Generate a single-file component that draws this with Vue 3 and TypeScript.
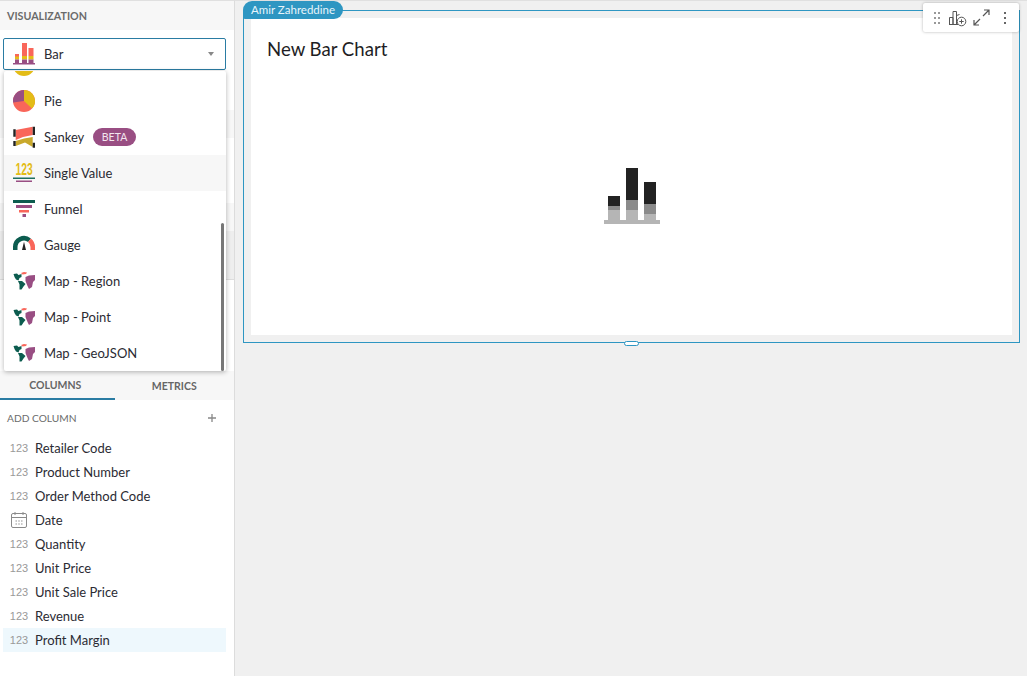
<script setup lang="ts">
const menu = [
  { label: 'Pie', icon: 'pie' },
  { label: 'Sankey', icon: 'sankey', beta: true },
  { label: 'Single Value', icon: 'single', hover: true },
  { label: 'Funnel', icon: 'funnel' },
  { label: 'Gauge', icon: 'gauge' },
  { label: 'Map - Region', icon: 'map' },
  { label: 'Map - Point', icon: 'map' },
  { label: 'Map - GeoJSON', icon: 'map' },
]
const columns = [
  { label: 'Retailer Code', type: 'num' },
  { label: 'Product Number', type: 'num' },
  { label: 'Order Method Code', type: 'num' },
  { label: 'Date', type: 'date' },
  { label: 'Quantity', type: 'num' },
  { label: 'Unit Price', type: 'num' },
  { label: 'Unit Sale Price', type: 'num' },
  { label: 'Revenue', type: 'num' },
  { label: 'Profit Margin', type: 'num', selected: true },
]
</script>

<template>
  <div class="page">
    <aside class="side">
      <div class="side-head">VISUALIZATION</div>
      <div class="picker-wrap">
        <div class="picker">
          <svg class="ico" width="24" height="24" viewBox="0 0 24 24">
            <path fill="#f9665a" d="M2 12h4v3H2zM9 1h5v13H9zM15.500 6h5v8h-5z" />
            <path fill="#e3bc17" d="M2 14.500h4v3H2zM9 14h5v3.500H9zM15.500 14h5v3.500h-5z" />
            <path fill="#994e83" d="M2 17.500h4V21H2zM9 17.500h5V21H9zM15.500 17.500h5V21h-5zM0 21h22v1.500H0z" />
          </svg>
          <span>Bar</span>
          <i class="caret"></i>
        </div>
      </div>
      <div class="under">
        <div class="under-a"></div>
        <div class="under-b"></div>
        <div class="under-c"></div>
      </div>
      <div class="tabs">
        <div class="tab active">COLUMNS</div>
        <div class="tab">METRICS</div>
      </div>
      <div class="add-row">
        <span>ADD COLUMN</span>
        <svg width="8" height="8" viewBox="0 0 8 8"><path d="M4 0v8M0 4h8" stroke="#888" stroke-width="1.300" /></svg>
      </div>
      <ul class="cols">
        <li v-for="c in columns" :key="c.label" class="col" :class="{ selected: c.selected }">
          <span class="type">
            <span v-if="c.type === 'num'" class="num">123</span>
            <svg v-else width="18" height="18" viewBox="0 0 18 18" fill="none" stroke="#8a8a8a">
              <rect x="1.500" y="2.500" width="15" height="14" rx="1.500" />
              <path d="M1.500 6.500h15M5 1v3M13 1v3" />
              <path stroke-dasharray="1.400 1.400" stroke-width="1.200" d="M5.500 10h7.500M5.500 13h7.500" />
            </svg>
          </span>
          <span>{{ c.label }}</span>
        </li>
      </ul>

      <div class="menu">
        <div class="menu-list">
          <div class="item">
            <svg class="ico" width="24" height="24" viewBox="0 0 24 24"><circle cx="11" cy="12" r="11" fill="#e3bc17" /><circle cx="11" cy="12" r="6" fill="#fff" /></svg>
          </div>
          <div v-for="m in menu" :key="m.label" class="item" :class="{ hover: m.hover }">
            <svg class="ico" width="24" height="24" viewBox="0 0 24 24">
              <template v-if="m.icon === 'pie'">
                <circle cx="11" cy="12" r="11" fill="#f9665a" />
                <path fill="#e3bc17" d="M11 1a11 11 0 0 1 8 18.500L11 12z" />
                <path fill="#994e83" d="M11 1v11L.1 13.500A11 11 0 0 1 11 1z" />
              </template>
              <template v-else-if="m.icon === 'sankey'">
                <path fill="#f9665a" d="M2.700 5 19.700 1.700V10L10 12 2.700 15z" />
                <path fill="#c9a92c" d="M2.700 16 11 13.500 19.700 12V22L12 17.500 2.700 21z" />
                <path fill="#222" d="M.3 4.300h2.400v7.400H.3zM.3 16h2.400v5H.3zM19.700 1.700H22V10h-2.300zM19.700 17.700H22v5h-2.300z" />
              </template>
              <template v-else-if="m.icon === 'single'">
                <text class="big-num" transform="translate(2.500 14) scale(.64 1)" font-size="16" font-weight="700" fill="#e3bc17">123</text>
                <rect x="0" y="16.500" width="22" height="1.500" fill="#1d6f60" />
                <rect x="3" y="19.500" width="16" height="1.500" fill="#994e83" />
              </template>
              <template v-else-if="m.icon === 'funnel'">
                <rect x="0" y="3" width="22" height="3" fill="#0c5c4f" />
                <rect x="3" y="8" width="16" height="3" fill="#994e83" />
                <rect x="6" y="13" width="10" height="2.500" fill="#f9665a" />
                <rect x="9.500" y="17" width="3.500" height="3" fill="#994e83" />
              </template>
              <template v-else-if="m.icon === 'gauge'">
                <path fill="none" stroke="#0c5c4f" stroke-width="4.500" d="M2.250 17v-3A8.750 8.750 0 0 1 16.500 7.200" />
                <path fill="none" stroke="#f9665a" stroke-width="4.500" d="M16.500 7.200A8.750 8.750 0 0 1 19.750 14v3" />
                <path fill="#222" d="M11 8.700l2 8.300H9z" />
              </template>
              <template v-else>
                <path fill="#0c5c4f" d="M.5 5 4 4.500 5.500 6 8.500 5 8.500 8 6.500 9 5.500 11.500 3 10.500 1.500 8zM5 12 9 12 12.500 15 10.500 17.500 8.500 20.500H6.500L6.500 15.500z" />
                <path fill="#f9665a" d="M8 4 11 3 14 3.500 13 5 9.500 5.500z" />
                <path fill="#994e83" d="M12.500 8 16 6.500 22 6 22 11 20 13 19 18 16 20 14.500 17 12.500 12z" />
              </template>
            </svg>
            <span>{{ m.label }}</span>
            <span v-if="m.beta" class="beta">BETA</span>
          </div>
        </div>
        <div class="scroll"></div>
      </div>
    </aside>

    <main class="canvas">
      <section class="frame">
        <div class="owner">Amir Zahreddine</div>
        <div class="tools">
          <svg width="8" height="14" viewBox="0 0 8 14" fill="#999"><path d="M1 1h2v2H1zM5 1h2v2H5zM1 6h2v2H1zM5 6h2v2H5zM1 11h2v2H1zM5 11h2v2H5z" /></svg>
          <svg width="18" height="18" viewBox="0 0 18 18" fill="none" stroke="#555" stroke-width="1"><path d="M.5 15.500v-7h3.500v7M4 15.500v-13h3.500v13M7.500 15.500v-9l3-1M0 15.500h9" /><circle cx="12.500" cy="12.500" r="4.300" fill="#fff" /><path d="M12.500 10.300v4.400M10.300 12.500h4.400" /></svg>
          <svg class="expand" width="17" height="17" viewBox="0 0 17 17" fill="none" stroke="#555" stroke-width="1.200"><path d="M10 7l6-6M11 1h5v5M7 10l-6 6M1 11v5h5" /></svg>
          <svg class="kebab" width="4" height="14" viewBox="0 0 4 14" fill="#666"><path d="M1 1h2v2H1zM1 6h2v2H1zM1 11h2v2H1z" /></svg>
        </div>
        <div class="card">
          <h2>New Bar Chart</h2>
          <div class="empty">
            <svg width="56" height="56" viewBox="0 0 56 56">
              <path fill="#222" d="M4 28h12v10H4zM22 0h12v32H22zM40 14h12v22H40z" />
              <path fill="#8a8a8a" d="M4 38h12v4H4zM22 32h12v10H22zM40 36h12v10H40z" />
              <path fill="#b5b5b5" d="M4 42h12v10H4zM22 42h12v10H22zM40 46h12v6H40zM0 52h56v4H0z" />
            </svg>
          </div>
        </div>
        <div class="handle"></div>
      </section>
    </main>
  </div>
</template>

<style>
html, body { margin: 0; background: #f0f0f0; }
</style>

<style scoped>
.page {
  display: flex;
  width: 1027px;
  height: 676px;
  overflow: hidden;
  font-family: Lato, "Noto Sans", sans-serif;
  font-size: 13px;
  color: #2b2b33;
  background: #f0f0f0;
}
.side {
  position: relative;
  box-sizing: border-box;
  width: 235px;
  height: 676px;
  flex: none;
  background: #fff;
  border-right: 1px solid #dcdcdc;
  border-top: 1px solid #e0e0e0;
}
.side-head {
  height: 29px;
  box-sizing: border-box;
  padding: 8px 7px 0;
  background: #f7f7f7;
  font-size: 10.700px;
  font-weight: 700;
  color: #6b6b6b;
}
.picker-wrap { padding: 8px 8px 0 3px; }
.picker {
  box-sizing: border-box;
  height: 32px;
  display: flex;
  align-items: center;
  gap: 7px;
  padding: 0 11px 0 9px;
  border: 1px solid #2a7ca3;
  border-radius: 2px;
}
.caret {
  margin-left: auto;
  border: 3.500px solid transparent;
  border-top: 4px solid #888;
  border-bottom: 0;
}
.ico { flex: none; overflow: visible; }
.big-num { font-family: "Liberation Sans", sans-serif; }
.under { height: 301px; display: flex; flex-direction: column; }
.under-a { height: 28px; margin-top: 40px; background: #f7f7f7; }
.under-b { height: 28px; margin-top: 65px; background: #f7f7f7; }
.under-c { height: 48px; background: #eee; border-bottom: 1px solid #ddd; }
.tabs { display: flex; height: 29px; background: #f7f7f7; }
.tab {
  width: 120px;
  box-sizing: border-box;
  text-align: center;
  padding-top: 9px;
  font-size: 10.500px;
  font-weight: 700;
  color: #666;
}
.tab.active {
  width: 115px;
  padding: 8px 4px 0 0;
  border-bottom: 2px solid #2a7ca3;
}
.add-row {
  display: flex;
  align-items: center;
  justify-content: space-between;
  height: 36px;
  padding: 0 18px 0 7px;
  font-size: 10.200px;
  color: #6b6b6b;
}
.add-row span { padding-bottom: 1px; }
.cols { list-style: none; margin: 0; padding: 0 8px 0 3px; }
.col { display: flex; align-items: center; height: 24px; font-size: 13px; }
.col.selected { background: #eef8fd; }
.type { width: 32px; flex: none; display: flex; justify-content: center; }
.num { font-family: "Liberation Sans", sans-serif; font-size: 11px; color: #999; }
.menu {
  position: absolute;
  left: 4px;
  top: 70px;
  width: 222px;
  height: 300px;
  overflow: hidden;
  background: #fff;
  border-radius: 2px;
  box-shadow: 0 1px 5px rgba(0, 0, 0, .3);
}
.menu-list { margin-top: -24px; }
.item {
  height: 36px;
  display: flex;
  align-items: center;
  gap: 7px;
  padding-left: 9px;
}
.item.hover { background: #f7f7f7; }
.beta {
  margin-left: 2px;
  padding: 0 8.500px;
  height: 18px;
  line-height: 18px;
  border-radius: 9px;
  background: #994e83;
  color: #f3e6ef;
  font-size: 10.500px;
}
.scroll {
  position: absolute;
  right: 2px;
  top: 152px;
  width: 3px;
  height: 148px;
  border-radius: 2px;
  background: #777;
}
.canvas {
  flex: 1;
  box-sizing: border-box;
  padding: 10px 7px 0 8px;
  border-top: 1px solid #e0e0e0;
}
.frame {
  position: relative;
  box-sizing: border-box;
  height: 333px;
  margin-top: -1px;
  padding: 7px;
  border: 1px solid #2e96c2;
}
.owner {
  position: absolute;
  left: -1px;
  top: -10px;
  height: 18px;
  line-height: 18px;
  padding: 0 8px;
  border-radius: 9px 9px 9px 2px;
  background: #2e96c2;
  color: #e8f5fb;
  font-size: 11.500px;
}
.tools {
  position: absolute;
  right: 0;
  top: -8px;
  box-sizing: border-box;
  width: 96px;
  height: 29px;
  display: flex;
  align-items: center;
  gap: 8px;
  padding-left: 10px;
  background: #fff;
  box-shadow: 0 0 3px rgba(0, 0, 0, .3);
  border-radius: 2px;
}
.expand { margin-left: -2px; }
.kebab { margin-left: 5px; }
.card {
  height: 100%;
  box-sizing: border-box;
  background: #fff;
  padding: 19px 16px 0;
  display: flex;
  flex-direction: column;
}
h2 { margin: 0; font-size: 18.600px; font-weight: 400; line-height: 24px; color: #1e1e24; }
.empty { display: flex; justify-content: center; padding-top: 107px; }
.handle {
  position: absolute;
  left: 380px;
  bottom: -4px;
  width: 15px;
  height: 5px;
  box-sizing: border-box;
  background: #fff;
  border: 1px solid #2e96c2;
  border-radius: 3px;
}
</style>
